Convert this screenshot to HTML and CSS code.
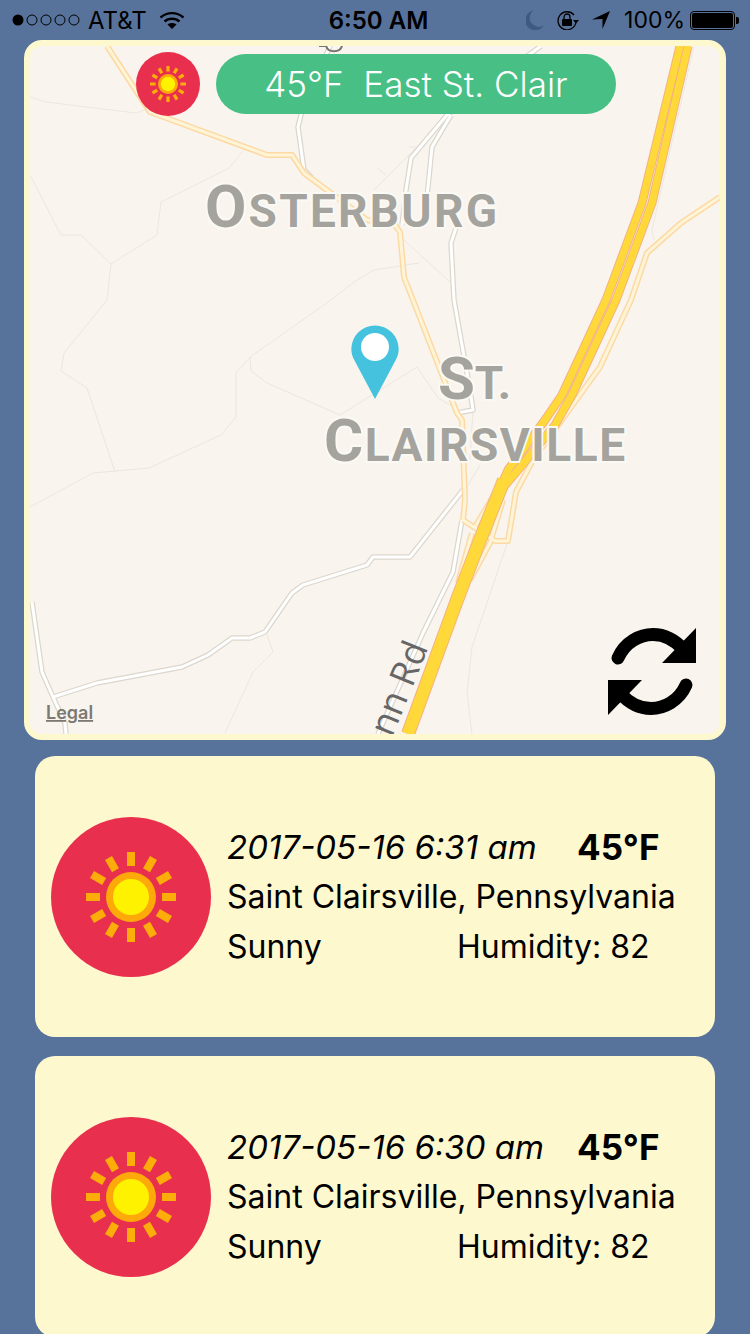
FILE: index.html
```html
<!DOCTYPE html>
<html lang="en">
<head>
    <meta charset="UTF-8">
    <meta name="viewport" content="width=device-width, initial-scale=1.0">
    <title>Weather log</title>
    <link rel="stylesheet" href="styles.css">
</head>
<body>
    <svg class="defs" width="0" height="0">
        <symbol id="sun" viewBox="0 0 160 160">
            <circle cx="80" cy="80" r="80" fill="#e8304e"/>
            <g stroke="#fdad0a" stroke-width="8" stroke-linecap="butt">
                <path id="ray" d="M80 35V49M80 111V125M35 80H49M111 80H125"/>
                <use href="#ray" transform="rotate(30 80 80)"/>
                <use href="#ray" transform="rotate(60 80 80)"/>
            </g>
            <circle cx="80" cy="80" r="25" fill="#fda90a"/>
            <circle cx="80" cy="80" r="18" fill="#fff200"/>
        </symbol>
    </svg>

    <!-- status bar -->
    <div class="status-bar">
        <div class="status-left">
            <svg class="signal" width="70" height="12" viewBox="0 0 70 12">
                <circle cx="6" cy="6" r="5.5" fill="#000"/>
                <g fill="none" stroke="#000" stroke-width="1">
                    <circle cx="20" cy="6" r="5"/>
                    <circle cx="34" cy="6" r="5"/>
                    <circle cx="48" cy="6" r="5"/>
                    <circle cx="62" cy="6" r="5"/>
                </g>
            </svg>
            <span class="carrier">AT&amp;T</span>
            <svg class="wifi" width="26" height="18" viewBox="0 0 26 18">
                <g fill="none" stroke="#000" stroke-width="2.4">
                    <path d="M1.5 6.5C8 .6 18 .6 24.5 6.5"/>
                    <path d="M5.5 10.5C9.6 6.8 16.4 6.8 20.5 10.5"/>
                </g>
                <path d="M8.5 13.6C11 11.6 15 11.6 17.5 13.6L13 18Z" fill="#000"/>
            </svg>
        </div>
        <div class="status-time">6:50 AM</div>
        <div class="status-right">
            <svg width="18" height="20" viewBox="0 0 18 20">
                <path d="M7.5 0.5A10 10 0 1 0 18 15.2A9 9 0 0 1 7.5 0.5Z" fill="#3f5a80"/>
            </svg>
            <svg class="rotation" width="24" height="20" viewBox="0 0 24 20">
                <path d="M20 12A9 9 0 1 1 18 5" fill="none" stroke="#000" stroke-width="1.3"/>
                <path d="M17 10H23L20 13.5Z" fill="#000"/>
                <rect x="6" y="9" width="10" height="7" rx="1" fill="#000"/>
                <path d="M8 9V7A3 3 0 0 1 14 7V9" fill="none" stroke="#000" stroke-width="1.3"/>
            </svg>
            <svg width="18" height="18" viewBox="0 0 18 18">
                <path d="M18 0L10.5 18V8L0 8.5Z" fill="#000"/>
            </svg>
            <span class="battery-pct">100%</span>
            <div class="battery"><div class="battery-fill"></div></div>
        </div>
    </div>

    <!-- map -->
    <div class="map-card">
        <div class="map">
            <svg class="map-svg" width="690" height="688" viewBox="30 46 690 688">
                <g class="line-faint">
                    <path d="M30 97L46 102L136 113L150 108"/>
                    <path d="M244 150L229 168L161 202L157 235L111 264L81 235H61L30 175"/>
                    <path d="M111 264L107 300L64 353L61 371L87 388L115 472"/>
                    <path d="M30 507L93 473L149 468L221 435L236 417V373L250 357L324 305L357 280L374 270L419 263"/>
                    <path d="M404 240L450 282"/>
                    <path d="M250 357L251 371L267 383L340 415L417 367L438 398L462 412"/>
                    <path d="M267 635L273 652L253 672L225 733"/>
                    <path d="M508 541L472 647L467 693L472 734"/>
                    <path d="M694 46L652 230L654 240"/>
                    <path d="M409 147H417L374 190M377 168L386 175"/>
                    <path d="M473 410L470 460M465 490L480 465"/>
                </g>

                <g class="road-local">
                    <g id="local-roads">
                        <path d="M330 46L301 115L298 127L304 170L312 178"/>
                        <path d="M541 46L447 115L411 158L406 190L402 225"/>
                        <path d="M451 115L432 147L426 207"/>
                        <path d="M456 228L451 243L454 300L470 390L473 410L457 413"/>
                        <path d="M463 490L410 557H373L367 565L303 585L292 593L265 632L250 638H232L208 655L182 667L97 683L53 697"/>
                        <path d="M32 602L42 672L53 697L65 723L66 734"/>
                        <path d="M462 520L453 572L423 633L378 734"/>
                    </g>
                </g>
                <g class="road-local-inner"><use href="#local-roads"/></g>

                <g class="road-second">
                    <g id="second-roads">
                        <path d="M107 46L131 83L150 112L267 155H292L304 173L367 220L395 225L400 232L404 277L457 413L462 420L465 500L463 520"/>
                        <path d="M463 520L495 541H508L516 492L533 460L600 367L631 300L647 253L681 223L720 197"/>
                        <path d="M475 527L503 480"/>
                        <path d="M472 533L458 583"/>
                        <path d="M503 500L490 543L470 580"/>
                    </g>
                </g>
                <g class="road-second-inner"><use href="#second-roads"/></g>

                <g class="road-main">
                    <g id="main-lanes">
                        <path d="M680 46L642 203L606 300L562 395L545 420L508 470L499 490"/>
                        <path d="M688 46L652 203L616 300L572 395L555 425L518 470L501 490"/>
                    </g>
                </g>
                <path class="road-merged" d="M504 480L480 540L457 600L408 734"/>
                <g class="road-main-inner"><use href="#main-lanes"/></g>
                <path class="road-merged-inner" d="M504 480L480 540L457 600L408 734"/>

                <path class="shield" d="M319 46H326C328 53 340 53 342 46"/>

                <text class="place" x="205" y="227" textLength="292">O<tspan class="place-small">STERBURG</tspan></text>
                <text class="place" x="438" y="399" textLength="73">S<tspan class="place-small">T.</tspan></text>
                <text class="place" x="324" y="461" textLength="301">C<tspan class="place-small">LAIRSVILLE</tspan></text>
                <text class="road-name" transform="translate(392 738) rotate(-68)">nn Rd</text>
                <text class="legal" x="46" y="719">Legal</text>

                <path class="pin" d="M375 325.500A23.700 23.700 0 0 1 398.700 349C398.700 353 397.500 356.500 396 359.500L375 399L354 359.500C352.500 356.500 351.300 353 351.300 349A23.700 23.700 0 0 1 375 325.500Z"/>
                <circle cx="375" cy="347" r="14" fill="#fff"/>
            </svg>

            <div class="map-top">
                <svg class="sun-small" width="64" height="64"><use href="#sun"/></svg>
                <div class="pill">45°F  East St. Clair</div>
            </div>

            <svg class="refresh" width="90" height="90" viewBox="607 627 90 90">
                <g id="refresh-half">
                    <path d="M618 658C625 642 640 634.500 653 634.500C665 634.500 676 641 684 650" fill="none" stroke="#000" stroke-width="13" stroke-linecap="round"/>
                    <path d="M696 628V663H662Z" fill="#000"/>
                </g>
                <use href="#refresh-half" transform="rotate(180 652 671.500)"/>
            </svg>
        </div>
    </div>

    <!-- log entries -->
    <div class="entry">
        <svg class="sun-big" width="160" height="160"><use href="#sun"/></svg>
        <div class="entry-text">
            <div class="entry-row">
                <span class="entry-date">2017-05-16 6:31 am</span>
                <span class="entry-temp">45°F</span>
            </div>
            <div class="entry-row">Saint Clairsville, Pennsylvania</div>
            <div class="entry-row">
                <span class="entry-cond">Sunny</span>
                <span>Humidity: 82</span>
            </div>
        </div>
    </div>

    <div class="entry">
        <svg class="sun-big" width="160" height="160"><use href="#sun"/></svg>
        <div class="entry-text">
            <div class="entry-row">
                <span class="entry-date">2017-05-16 6:30 am</span>
                <span class="entry-temp">45°F</span>
            </div>
            <div class="entry-row">Saint Clairsville, Pennsylvania</div>
            <div class="entry-row">
                <span class="entry-cond">Sunny</span>
                <span>Humidity: 82</span>
            </div>
        </div>
    </div>
</body>
</html>
```

FILE: styles.css
```css
html,
body {
    margin: 0;
    height: 1334px;
    overflow: hidden;
}

body {
    background-color: #58739b;
    font-family: Inter, "Liberation Sans", sans-serif;
    color: #000;
}

.defs {
    display: block;
    height: 0;
}

/* status bar */
.status-bar {
    height: 40px;
    display: grid;
    grid-template-columns: 1fr auto 1fr;
    align-items: center;
    padding: 0 15px 0 12px;
    font-size: 24px;
}

.status-left,
.status-right {
    display: flex;
    align-items: center;
}

.status-right {
    justify-content: flex-end;
    gap: 12px;
}

.carrier {
    margin-left: 6px;
}

.wifi {
    margin-left: 12px;
}

.status-time {
    margin-left: 10px;
    font-weight: 600;
}

.battery-pct {
    margin-left: 2px;
    margin-right: -7px;
    font-size: 23px;
}

.battery {
    position: relative;
    width: 45px;
    height: 19px;
    box-sizing: border-box;
    border: 1px solid #000;
    border-radius: 4px;
    padding: 1px;
}

.battery::after {
    content: "";
    position: absolute;
    right: -5px;
    top: 5px;
    width: 3px;
    height: 7px;
    background-color: #000;
    border-radius: 0 2px 2px 0;
}

.battery-fill {
    height: 100%;
    background-color: #000;
    border-radius: 2px;
}

/* map */
.map-card {
    margin: 0 24px;
    border: 6px solid #fef8cf;
    border-radius: 18px;
    background-color: #fef8cf;
}

.map {
    position: relative;
    height: 688px;
    overflow: hidden;
    border-radius: 12px;
    background-color: #f9f5ee;
}

.map-svg {
    display: block;
}

.map-svg path {
    stroke-linejoin: round;
}

.line-faint path {
    fill: none;
    stroke: #ebe7e0;
    stroke-width: 1;
}

.road-local,
.road-local-inner,
.road-second,
.road-second-inner,
.road-main,
.road-main-inner,
.road-merged,
.road-merged-inner {
    fill: none;
}

.road-local {
    stroke: #dcd7cd;
    stroke-width: 5.5;
}

.road-local-inner {
    stroke: #fff;
    stroke-width: 3;
}

.road-second {
    stroke: #fcd9a4;
    stroke-width: 6;
}

.road-second-inner {
    stroke: #fff5d6;
    stroke-width: 3;
}

.road-main {
    stroke: #f4b183;
    stroke-width: 9;
}

.road-main-inner {
    stroke: #ffd93a;
    stroke-width: 7;
}

.road-merged {
    stroke: #f4b183;
    stroke-width: 14;
}

.road-merged-inner {
    stroke: #ffd93a;
    stroke-width: 12;
}

.shield {
    fill: none;
    stroke: #77756f;
    stroke-width: 2;
}

.place {
    font-family: Roboto, "Liberation Sans", sans-serif;
    font-weight: 700;
    font-size: 60px;
    fill: #a5a39d;
    stroke: #fbf9f4;
    stroke-width: 4px;
    paint-order: stroke;
}

.place-small {
    font-size: 46px;
}

.road-name {
    font-family: "Open Sans", "Liberation Sans", sans-serif;
    font-size: 36px;
    fill: #666;
}

.legal {
    font-family: Inter, "Liberation Sans", sans-serif;
    font-size: 18px;
    font-weight: 600;
    fill: #7b7971;
    text-decoration: underline;
}

.pin {
    fill: #45c2dd;
}

.map-top {
    position: absolute;
    top: 6px;
    left: 106px;
    display: flex;
    align-items: center;
    gap: 16px;
}

.sun-small,
.sun-big {
    display: block;
    flex: none;
}

.pill {
    width: 400px;
    height: 60px;
    line-height: 60px;
    border-radius: 30px;
    background-color: #48bf85;
    color: #fff;
    font-size: 35px;
    font-weight: 300;
    text-align: center;
    white-space: pre;
}

.refresh {
    position: absolute;
    right: 23px;
    bottom: 17px;
}

/* log entries */
.entry {
    box-sizing: border-box;
    width: 680px;
    height: 281px;
    margin: 16px 35px 19px;
    padding: 0 16px;
    display: flex;
    align-items: center;
    gap: 16px;
    border-radius: 20px;
    background-color: #fef8cf;
    font-size: 32px;
}

.entry + .entry {
    margin-top: 0;
}

.entry-text {
    flex: 1;
}

.entry-row {
    display: flex;
    height: 50px;
    align-items: center;
    white-space: nowrap;
}

.entry-date {
    width: 350px;
    font-size: 33px;
    font-style: italic;
}

.entry-temp {
    font-size: 35px;
    font-weight: 700;
}

.entry-cond {
    width: 230px;
}
```
